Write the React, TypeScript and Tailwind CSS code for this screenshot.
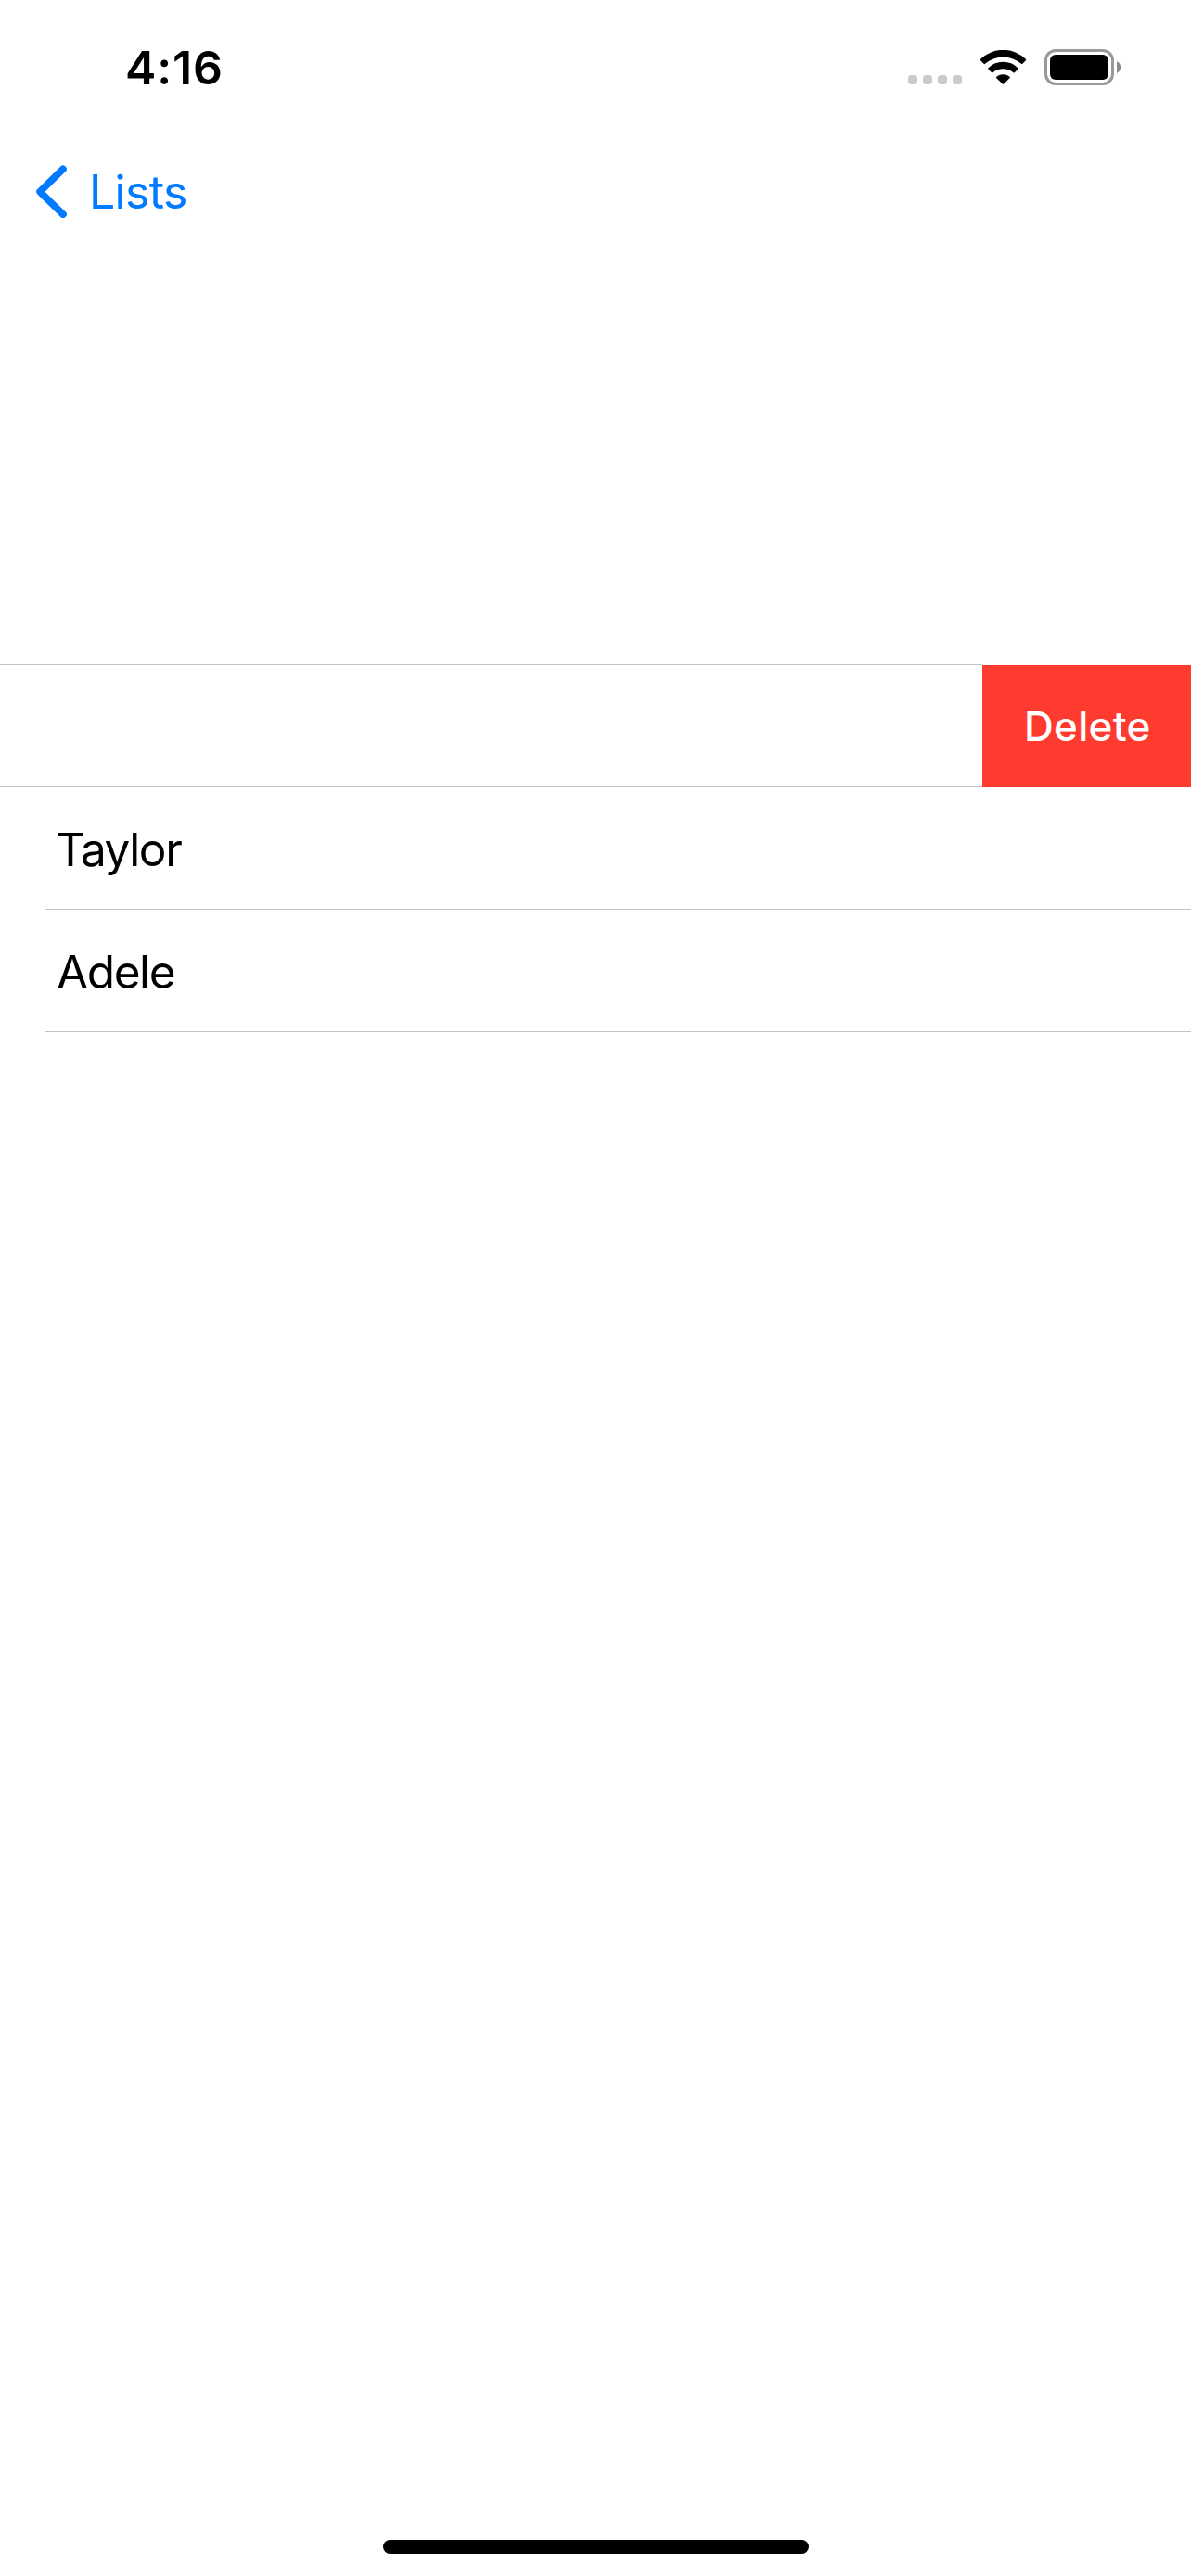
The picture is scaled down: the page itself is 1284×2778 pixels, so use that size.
function SignalDots() {
  return (
    <div className="mb-px flex gap-[6px]">
      {[0, 1, 2, 3].map((dot) => (
        <span key={dot} className="size-[10px] rounded-[3.5px] bg-[#cbcbcb]" />
      ))}
    </div>
  );
}

function WifiIcon() {
  return (
    <svg className="mb-px ml-[19px] h-[37px] w-[51px]" viewBox="288 72 153 111" fill="#000">
      <path d="M291.5 101A105 105 0 0 1 437.5 101Q440 103.500 437.500 106L427 116.500Q425 118.500 423 116.500A89.500 89.500 0 0 0 306 116.500Q304 118.500 302 116.500L291.500 106Q289 103.500 291.500 101Z" />
      <path d="M316.500 129.500A68 68 0 0 1 412 129.500Q414 131.500 412 133.500L401.500 144.500Q399.500 146.500 397.500 144.500A52 52 0 0 0 331 144.500Q329 146.500 327 144.500L316.500 133.500Q314.500 131.500 316.500 129.500Z" />
      <path d="M343 158.500A34 34 0 0 1 385.500 158.500Q388 160.500 385.500 162.500L366.500 181.500Q364.500 183.500 362.500 181.500L343 162.500Q341 160.500 343 158.500Z" />
    </svg>
  );
}

function Battery() {
  return (
    <div className="ml-[19px] flex items-center gap-[3px]">
      <div className="h-[39px] w-[75px] rounded-[12px] border-[3px] border-[#999999] p-[3px]">
        <div className="h-full w-full rounded-[6px] bg-black" />
      </div>
      <svg className="h-[13px] w-[5px]" viewBox="0 0 5 13" fill="#8c8c8c">
        <path d="M0 0C2.600 1.200 4.200 3.700 4.200 6.500S2.600 11.800 0 13Z" />
      </svg>
    </div>
  );
}

function StatusBar() {
  return (
    <header className="flex h-[132px] items-start justify-between pr-[75px] pl-[135px]">
      <time className="mt-[43px] text-[50px] leading-[60px] font-semibold tracking-[0.9px]">4:16</time>
      <div className="mt-[53px] flex items-end">
        <SignalDots />
        <WifiIcon />
        <Battery />
      </div>
    </header>
  );
}

function NavBar() {
  return (
    <nav className="flex h-[584px] items-start pl-[39px]">
      <button className="mt-[45px] flex items-start text-[#007aff]">
        <svg
          className="mt-px h-[57px] w-[33px]"
          viewBox="57 54 99 171"
          fill="none"
          stroke="currentColor"
          strokeWidth="23"
          strokeLinecap="round"
          strokeLinejoin="round"
        >
          <path d="M144 67L69 140L144 213.500" />
        </svg>
        <span className="ml-[24px] text-[50px] leading-[60px] tracking-[-0.65px]">Lists</span>
      </button>
    </nav>
  );
}

function SwipedRow() {
  return (
    <li className="flex h-[133px]">
      <div className="flex-1 border-y border-[#c3c3c5]" />
      <button className="mt-px flex h-[132px] w-[225px] items-center bg-[#ff3b30] pl-[45px] text-[44px] leading-[54px] font-medium tracking-[0.3px] text-white">
        Delete
      </button>
    </li>
  );
}

export default function App() {
  return (
    <div className="flex h-[2778px] w-[1284px] flex-col bg-white font-[Inter,sans-serif] text-black">
      <StatusBar />
      <NavBar />
      <ul className="flex-1">
        <SwipedRow />
        <li className="ml-[48px] flex h-[132px] items-center border-b border-[#c3c3c5] pt-[3px] pl-[12px] text-[49.5px] leading-[60px] tracking-[-1.4px]">
          Taylor
        </li>
        <li className="ml-[48px] flex h-[132px] items-center border-b border-[#c3c3c5] pt-[3px] pl-[13px] text-[49.5px] leading-[60px] tracking-[-1.4px]">
          Adele
        </li>
      </ul>
      <div className="mb-[24px] ml-[413px] h-[15px] w-[459px] rounded-full bg-black" />
    </div>
  );
}
